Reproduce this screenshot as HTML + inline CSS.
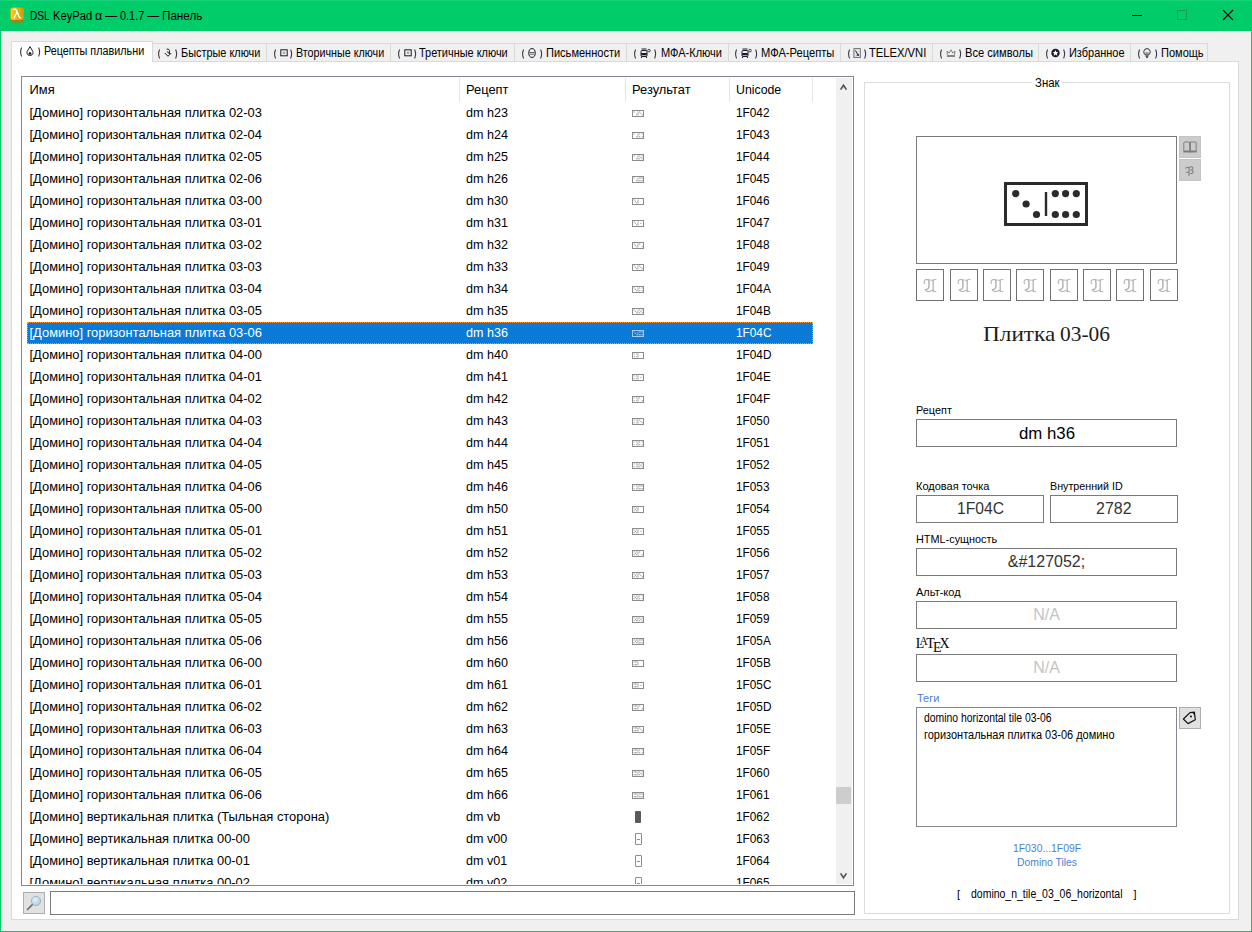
<!DOCTYPE html>
<html><head><meta charset="utf-8"><title>DSL KeyPad</title>
<style>
html,body{margin:0;padding:0;}
body{width:1252px;height:932px;position:relative;overflow:hidden;background:#F0F0F0;font-family:"Liberation Sans",sans-serif;}
.r{position:absolute;}
.t{position:absolute;white-space:pre;font-family:"Liberation Sans",sans-serif;}
</style></head><body>
<div class="r" style="left:0px;top:0px;width:1252px;height:31px;background:#00CC6A;"></div>
<div class="r" style="left:0px;top:0px;width:1252px;height:1px;background:#19D27A;"></div>
<div class="r" style="left:0px;top:0px;width:1px;height:932px;background:#00CC6A;"></div>
<div class="r" style="left:1251px;top:0px;width:1px;height:932px;background:#00CC6A;"></div>
<div class="r" style="left:0px;top:931px;width:1252px;height:1px;background:#00CC6A;"></div>
<svg class="r" style="left:10px;top:7px" width="15" height="16" viewBox="0 0 15 16"><defs><linearGradient id="gi" x1="0" x2="1" y1="0" y2="0"><stop offset="0" stop-color="#FAD01E"/><stop offset="1" stop-color="#C9980E"/></linearGradient></defs><rect x="0.5" y="1.5" width="13.5" height="14" rx="2.5" fill="#B07D12"/><rect x="0.5" y="0.5" width="13.5" height="12.5" rx="2.5" fill="url(#gi)"/><path d="M3.8 2.3 Q5.9 1.6 6.6 3.4 L9.2 10 Q9.6 11 10.8 10.9" stroke="#fff" stroke-width="1.3" fill="none" stroke-linecap="round"/><path d="M6.9 5.4 L4.2 10.8" stroke="#fff" stroke-width="1.3" fill="none" stroke-linecap="round"/></svg>
<div class="t" style="left:30.10px;top:10px;font-size:12px;line-height:12px;color:#000;font-family:'Liberation Sans',sans-serif;transform:scaleX(0.8439);transform-origin:0 0;">DSL</div>
<div class="t" style="left:53.10px;top:10px;font-size:12px;line-height:12px;color:#000;font-family:'Liberation Sans',sans-serif;transform:scaleX(0.9326);transform-origin:0 0;">KeyPad</div>
<div class="t" style="left:94.90px;top:10px;font-size:12px;line-height:12px;color:#000;font-family:'Liberation Sans',sans-serif;transform:scaleX(1.0378);transform-origin:0 0;">α</div>
<div class="t" style="left:104.70px;top:10px;font-size:12px;line-height:12px;color:#000;font-family:'Liberation Sans',sans-serif;transform:scaleX(1.0083);transform-origin:0 0;">—</div>
<div class="t" style="left:119.60px;top:10px;font-size:12px;line-height:12px;color:#000;font-family:'Liberation Sans',sans-serif;transform:scaleX(0.9100);transform-origin:0 0;">0.1.7</div>
<div class="t" style="left:147.20px;top:10px;font-size:12px;line-height:12px;color:#000;font-family:'Liberation Sans',sans-serif;transform:scaleX(1.0083);transform-origin:0 0;">—</div>
<div class="t" style="left:162.40px;top:10px;font-size:12px;line-height:12px;color:#000;font-family:'Liberation Sans',sans-serif;transform:scaleX(0.9718);transform-origin:0 0;">Панель</div>
<div class="r" style="left:1132px;top:15px;width:10px;height:1px;background:#000;"></div>
<div class="r" style="left:1177px;top:10px;width:10px;height:10px;box-sizing:border-box;border:1px solid #1F9A5C;"></div>
<svg class="r" style="left:1222px;top:9px" width="12" height="12" viewBox="0 0 12 12"><path d="M1 1 L11 11 M11 1 L1 11" stroke="#000" stroke-width="1.1"/></svg>
<div class="r" style="left:11px;top:61px;width:1228px;height:859px;box-sizing:border-box;border:1px solid #D9D9D9;background:#FFFFFF;"></div>
<div class="r" style="left:152px;top:43px;width:115px;height:19px;box-sizing:border-box;border:1px solid #D9D9D9;background:#F0F0F0;"></div>
<div class="r" style="left:266px;top:43px;width:125px;height:19px;box-sizing:border-box;border:1px solid #D9D9D9;background:#F0F0F0;"></div>
<div class="r" style="left:390px;top:43px;width:125px;height:19px;box-sizing:border-box;border:1px solid #D9D9D9;background:#F0F0F0;"></div>
<div class="r" style="left:514px;top:43px;width:113px;height:19px;box-sizing:border-box;border:1px solid #D9D9D9;background:#F0F0F0;"></div>
<div class="r" style="left:626px;top:43px;width:103px;height:19px;box-sizing:border-box;border:1px solid #D9D9D9;background:#F0F0F0;"></div>
<div class="r" style="left:728px;top:43px;width:113px;height:19px;box-sizing:border-box;border:1px solid #D9D9D9;background:#F0F0F0;"></div>
<div class="r" style="left:840px;top:43px;width:93px;height:19px;box-sizing:border-box;border:1px solid #D9D9D9;background:#F0F0F0;"></div>
<div class="r" style="left:932px;top:43px;width:107px;height:19px;box-sizing:border-box;border:1px solid #D9D9D9;background:#F0F0F0;"></div>
<div class="r" style="left:1038px;top:43px;width:93px;height:19px;box-sizing:border-box;border:1px solid #D9D9D9;background:#F0F0F0;"></div>
<div class="r" style="left:1130px;top:43px;width:78px;height:19px;box-sizing:border-box;border:1px solid #D9D9D9;background:#F0F0F0;"></div>
<div class="r" style="left:11px;top:41px;width:142px;height:21px;box-sizing:border-box;border:1px solid #D9D9D9;border-bottom:none;background:#FFFFFF;"></div>
<div class="r" style="left:12px;top:61px;width:140px;height:1px;background:#FFFFFF;"></div>
<svg class="r" style="left:19.1px;top:47px" width="3" height="10" viewBox="0 0 3 10"><path d="M2.6 0.5 Q0.6 5 2.6 9.5" stroke="#3A3A4A" stroke-width="1.1" fill="none"/></svg>
<svg class="r" style="left:26px;top:46px" width="8" height="10" viewBox="0 0 8 10"><path d="M4 0.6 L6.9 5.6 Q7.6 9.4 4 9.4 Q0.4 9.4 1.1 5.6 Z" fill="none" stroke="#222" stroke-width="1"/><path d="M2 8.6 L4 5.6 L6 8.6 Z" fill="#111"/></svg>
<svg class="r" style="left:37.8px;top:47px" width="3" height="10" viewBox="0 0 3 10"><path d="M0.6 0.5 Q2.6 5 0.6 9.5" stroke="#3A3A4A" stroke-width="1.1" fill="none"/></svg>
<div class="t" style="left:44.10px;top:45px;font-size:12px;line-height:12px;color:#000;font-family:'Liberation Sans',sans-serif;transform:scaleX(0.8998);transform-origin:0 0;">Рецепты плавильни</div>
<svg class="r" style="left:157.2px;top:49px" width="3" height="10" viewBox="0 0 3 10"><path d="M2.6 0.5 Q0.6 5 2.6 9.5" stroke="#3A3A4A" stroke-width="1.1" fill="none"/></svg>
<svg class="r" style="left:163.6px;top:48px" width="8" height="10" viewBox="0 0 8 10"><path d="M0.8 5 L4 8.3 L7.2 5" stroke="#1A1A2A" stroke-width="1" fill="none"/><path d="M2.6 1.2 Q5 0.6 5.4 2.4 V6 M3.2 3.4 Q3.6 5 5 5" stroke="#1A1A2A" stroke-width="1" fill="none"/></svg>
<svg class="r" style="left:174.8px;top:49px" width="3" height="10" viewBox="0 0 3 10"><path d="M0.6 0.5 Q2.6 5 0.6 9.5" stroke="#3A3A4A" stroke-width="1.1" fill="none"/></svg>
<div class="t" style="left:181.00px;top:47px;font-size:12px;line-height:12px;color:#000;font-family:'Liberation Sans',sans-serif;transform:scaleX(0.9086);transform-origin:0 0;">Быстрые ключи</div>
<svg class="r" style="left:273.2px;top:49px" width="3" height="10" viewBox="0 0 3 10"><path d="M2.6 0.5 Q0.6 5 2.6 9.5" stroke="#3A3A4A" stroke-width="1.1" fill="none"/></svg>
<svg class="r" style="left:279.6px;top:48px" width="8" height="10" viewBox="0 0 8 10"><rect x="0.8" y="1.8" width="6.4" height="6" fill="none" stroke="#1A1A2A" stroke-width="1"/><rect x="2.8" y="3.6" width="2.4" height="2.4" fill="#aaa"/></svg>
<svg class="r" style="left:290px;top:49px" width="3" height="10" viewBox="0 0 3 10"><path d="M0.6 0.5 Q2.6 5 0.6 9.5" stroke="#3A3A4A" stroke-width="1.1" fill="none"/></svg>
<div class="t" style="left:296.20px;top:47px;font-size:12px;line-height:12px;color:#000;font-family:'Liberation Sans',sans-serif;transform:scaleX(0.8944);transform-origin:0 0;">Вторичные ключи</div>
<svg class="r" style="left:397.2px;top:49px" width="3" height="10" viewBox="0 0 3 10"><path d="M2.6 0.5 Q0.6 5 2.6 9.5" stroke="#3A3A4A" stroke-width="1.1" fill="none"/></svg>
<svg class="r" style="left:403.6px;top:48px" width="8" height="10" viewBox="0 0 8 10"><rect x="0.8" y="1.8" width="6.4" height="6" fill="none" stroke="#1A1A2A" stroke-width="1"/><rect x="2.8" y="3.6" width="2.4" height="2.4" fill="#aaa"/></svg>
<svg class="r" style="left:414px;top:49px" width="3" height="10" viewBox="0 0 3 10"><path d="M0.6 0.5 Q2.6 5 0.6 9.5" stroke="#3A3A4A" stroke-width="1.1" fill="none"/></svg>
<div class="t" style="left:419.40px;top:47px;font-size:12px;line-height:12px;color:#000;font-family:'Liberation Sans',sans-serif;transform:scaleX(0.9106);transform-origin:0 0;">Третичные ключи</div>
<svg class="r" style="left:521.2px;top:49px" width="3" height="10" viewBox="0 0 3 10"><path d="M2.6 0.5 Q0.6 5 2.6 9.5" stroke="#3A3A4A" stroke-width="1.1" fill="none"/></svg>
<svg class="r" style="left:527.8px;top:48px" width="8" height="10" viewBox="0 0 8 10"><ellipse cx="4" cy="5" rx="3.2" ry="4.4" fill="none" stroke="#1A1A2A" stroke-width="1"/><path d="M1.5 4.5 H6.5 M2 6.2 H6" stroke="#666" stroke-width="1"/></svg>
<svg class="r" style="left:540px;top:49px" width="3" height="10" viewBox="0 0 3 10"><path d="M0.6 0.5 Q2.6 5 0.6 9.5" stroke="#3A3A4A" stroke-width="1.1" fill="none"/></svg>
<div class="t" style="left:546.10px;top:47px;font-size:12px;line-height:12px;color:#000;font-family:'Liberation Sans',sans-serif;transform:scaleX(0.9201);transform-origin:0 0;">Письменности</div>
<svg class="r" style="left:633.2px;top:49px" width="3" height="10" viewBox="0 0 3 10"><path d="M2.6 0.5 Q0.6 5 2.6 9.5" stroke="#3A3A4A" stroke-width="1.1" fill="none"/></svg>
<svg class="r" style="left:639.6px;top:48px" width="11" height="10" viewBox="0 0 11 10"><path d="M1.5 1 H6.5" stroke="#1A1A2A" stroke-width="1"/><rect x="1" y="2.5" width="6" height="6" rx="1" fill="none" stroke="#1A1A2A" stroke-width="1"/><rect x="1.2" y="5" width="5.6" height="2.3" fill="#1A1A2A"/><path d="M2 8.5 L1.2 10 M6 8.5 L6.8 10" stroke="#1A1A2A" stroke-width="1"/><circle cx="9" cy="2.6" r="1.3" fill="none" stroke="#334" stroke-width="0.9"/></svg>
<svg class="r" style="left:653.6px;top:49px" width="3" height="10" viewBox="0 0 3 10"><path d="M0.6 0.5 Q2.6 5 0.6 9.5" stroke="#3A3A4A" stroke-width="1.1" fill="none"/></svg>
<div class="t" style="left:660.50px;top:47px;font-size:12px;line-height:12px;color:#000;font-family:'Liberation Sans',sans-serif;transform:scaleX(0.9186);transform-origin:0 0;">МФА-Ключи</div>
<svg class="r" style="left:734px;top:49px" width="3" height="10" viewBox="0 0 3 10"><path d="M2.6 0.5 Q0.6 5 2.6 9.5" stroke="#3A3A4A" stroke-width="1.1" fill="none"/></svg>
<svg class="r" style="left:740.8px;top:48px" width="11" height="10" viewBox="0 0 11 10"><path d="M1.5 1 H6.5" stroke="#1A1A2A" stroke-width="1"/><rect x="1" y="2.5" width="6" height="6" rx="1" fill="none" stroke="#1A1A2A" stroke-width="1"/><rect x="1.2" y="5" width="5.6" height="2.3" fill="#1A1A2A"/><path d="M2 8.5 L1.2 10 M6 8.5 L6.8 10" stroke="#1A1A2A" stroke-width="1"/><circle cx="9" cy="2.6" r="1.3" fill="none" stroke="#334" stroke-width="0.9"/></svg>
<svg class="r" style="left:754.8px;top:49px" width="3" height="10" viewBox="0 0 3 10"><path d="M0.6 0.5 Q2.6 5 0.6 9.5" stroke="#3A3A4A" stroke-width="1.1" fill="none"/></svg>
<div class="t" style="left:760.90px;top:47px;font-size:12px;line-height:12px;color:#000;font-family:'Liberation Sans',sans-serif;transform:scaleX(0.9302);transform-origin:0 0;">МФА-Рецепты</div>
<svg class="r" style="left:847.2px;top:49px" width="3" height="10" viewBox="0 0 3 10"><path d="M2.6 0.5 Q0.6 5 2.6 9.5" stroke="#3A3A4A" stroke-width="1.1" fill="none"/></svg>
<svg class="r" style="left:853px;top:48px" width="8" height="10" viewBox="0 0 8 10"><rect x="0.9" y="0.6" width="6.4" height="9" fill="#E4E4F0" stroke="#666" stroke-width="0.9"/><path d="M2.4 2.4 L5.6 8 M3.6 7.6 L5.8 6.2" stroke="#222" stroke-width="1"/></svg>
<svg class="r" style="left:864px;top:49px" width="3" height="10" viewBox="0 0 3 10"><path d="M0.6 0.5 Q2.6 5 0.6 9.5" stroke="#3A3A4A" stroke-width="1.1" fill="none"/></svg>
<div class="t" style="left:869.40px;top:47px;font-size:12px;line-height:12px;color:#000;font-family:'Liberation Sans',sans-serif;transform:scaleX(0.9338);transform-origin:0 0;">TELEX/VNI</div>
<svg class="r" style="left:939.2px;top:49px" width="3" height="10" viewBox="0 0 3 10"><path d="M2.6 0.5 Q0.6 5 2.6 9.5" stroke="#3A3A4A" stroke-width="1.1" fill="none"/></svg>
<svg class="r" style="left:945.5px;top:48px" width="10" height="10" viewBox="0 0 10 10"><path d="M1 8.5 H9 M1.5 7.5 L1 3 L3.2 5 L5 1.8 L6.8 5 L9 3 L8.5 7.5 Z" fill="none" stroke="#777" stroke-width="0.9"/></svg>
<svg class="r" style="left:958.8px;top:49px" width="3" height="10" viewBox="0 0 3 10"><path d="M0.6 0.5 Q2.6 5 0.6 9.5" stroke="#3A3A4A" stroke-width="1.1" fill="none"/></svg>
<div class="t" style="left:964.90px;top:47px;font-size:12px;line-height:12px;color:#000;font-family:'Liberation Sans',sans-serif;transform:scaleX(0.9270);transform-origin:0 0;">Все символы</div>
<svg class="r" style="left:1045.2px;top:49px" width="3" height="10" viewBox="0 0 3 10"><path d="M2.6 0.5 Q0.6 5 2.6 9.5" stroke="#3A3A4A" stroke-width="1.1" fill="none"/></svg>
<svg class="r" style="left:1051px;top:48px" width="9" height="10" viewBox="0 0 9 10"><circle cx="4.5" cy="5" r="4.2" fill="#1A1A2A"/><path d="M4.5 2 L5.3 4.1 L7.4 4.2 L5.8 5.5 L6.3 7.7 L4.5 6.5 L2.7 7.7 L3.2 5.5 L1.6 4.2 L3.7 4.1Z" fill="#fff"/></svg>
<svg class="r" style="left:1062.8px;top:49px" width="3" height="10" viewBox="0 0 3 10"><path d="M0.6 0.5 Q2.6 5 0.6 9.5" stroke="#3A3A4A" stroke-width="1.1" fill="none"/></svg>
<div class="t" style="left:1068.90px;top:47px;font-size:12px;line-height:12px;color:#000;font-family:'Liberation Sans',sans-serif;transform:scaleX(0.9124);transform-origin:0 0;">Избранное</div>
<svg class="r" style="left:1137px;top:49px" width="3" height="10" viewBox="0 0 3 10"><path d="M2.6 0.5 Q0.6 5 2.6 9.5" stroke="#3A3A4A" stroke-width="1.1" fill="none"/></svg>
<svg class="r" style="left:1143px;top:48px" width="8" height="10" viewBox="0 0 8 10"><path d="M2.3 7 Q0.5 5.2 0.8 3.4 Q1.3 0.6 4 0.6 Q6.7 0.6 7.2 3.4 Q7.5 5.2 5.7 7 Z M2.6 8.2 H5.4 M3 9.3 H5" fill="none" stroke="#1A1A2A" stroke-width="0.9"/><path d="M3 7 V4.4 L4 5.4 L5 4.4 V7" fill="none" stroke="#444" stroke-width="0.7"/></svg>
<svg class="r" style="left:1155px;top:49px" width="3" height="10" viewBox="0 0 3 10"><path d="M0.6 0.5 Q2.6 5 0.6 9.5" stroke="#3A3A4A" stroke-width="1.1" fill="none"/></svg>
<div class="t" style="left:1160.90px;top:47px;font-size:12px;line-height:12px;color:#000;font-family:'Liberation Sans',sans-serif;transform:scaleX(0.9189);transform-origin:0 0;">Помощь</div>
<div class="r" style="left:21px;top:76px;width:833px;height:810px;box-sizing:border-box;border:1px solid #828790;background:#FFFFFF;"></div>
<div class="r" style="left:459px;top:78px;width:1px;height:24px;background:#E5E5E5;"></div>
<div class="r" style="left:625px;top:78px;width:1px;height:24px;background:#E5E5E5;"></div>
<div class="r" style="left:729px;top:78px;width:1px;height:24px;background:#E5E5E5;"></div>
<div class="r" style="left:812px;top:78px;width:1px;height:24px;background:#E5E5E5;"></div>
<div class="t" style="left:29.50px;top:84px;font-size:12.9px;line-height:12.9px;color:#000;font-family:'Liberation Sans',sans-serif;">Имя</div>
<div class="t" style="left:466.00px;top:84px;font-size:12.9px;line-height:12.9px;color:#000;font-family:'Liberation Sans',sans-serif;">Рецепт</div>
<div class="t" style="left:632.00px;top:84px;font-size:12.9px;line-height:12.9px;color:#000;font-family:'Liberation Sans',sans-serif;">Результат</div>
<div class="t" style="left:736.00px;top:84px;font-size:12.9px;line-height:12.9px;color:#000;font-family:'Liberation Sans',sans-serif;transform:scaleX(0.9557);transform-origin:0 0;">Unicode</div>
<div class="r" style="left:22px;top:102px;width:814px;height:782px;overflow:hidden">
<div class="t" style="left:7.5px;top:5px;font-size:12.9px;line-height:12.9px;color:#000;">[Домино] горизонтальная плитка 02-03</div><div class="t" style="left:444px;top:5px;font-size:12.9px;line-height:12.9px;color:#000;transform:scaleX(0.975);transform-origin:0 0;">dm h23</div><div class="t" style="left:714px;top:5px;font-size:12.9px;line-height:12.9px;color:#000;transform:scaleX(0.915);transform-origin:0 0;">1F042</div><div class="r" style="left:610px;top:8px;width:12px;height:7px;box-sizing:border-box;border:1px solid #8C8C8C;"></div><svg class="r" style="left:610px;top:8px" width="12" height="7"><rect x="5.6" y="1.5" width="0.8" height="4" fill="#9A9A9A"/><rect x="1.6" y="1.4" width="1.1" height="1.1" fill="#9A9A9A"/><rect x="4.2" y="4.2" width="1.1" height="1.1" fill="#9A9A9A"/><rect x="7.1" y="1.4" width="1.1" height="1.1" fill="#9A9A9A"/><rect x="8.4" y="2.8" width="1.1" height="1.1" fill="#9A9A9A"/><rect x="9.7" y="4.2" width="1.1" height="1.1" fill="#9A9A9A"/></svg><div class="t" style="left:7.5px;top:27px;font-size:12.9px;line-height:12.9px;color:#000;">[Домино] горизонтальная плитка 02-04</div><div class="t" style="left:444px;top:27px;font-size:12.9px;line-height:12.9px;color:#000;transform:scaleX(0.975);transform-origin:0 0;">dm h24</div><div class="t" style="left:714px;top:27px;font-size:12.9px;line-height:12.9px;color:#000;transform:scaleX(0.915);transform-origin:0 0;">1F043</div><div class="r" style="left:610px;top:30px;width:12px;height:7px;box-sizing:border-box;border:1px solid #8C8C8C;"></div><svg class="r" style="left:610px;top:30px" width="12" height="7"><rect x="5.6" y="1.5" width="0.8" height="4" fill="#9A9A9A"/><rect x="1.6" y="1.4" width="1.1" height="1.1" fill="#9A9A9A"/><rect x="4.2" y="4.2" width="1.1" height="1.1" fill="#9A9A9A"/><rect x="7.1" y="1.4" width="1.1" height="1.1" fill="#9A9A9A"/><rect x="9.7" y="1.4" width="1.1" height="1.1" fill="#9A9A9A"/><rect x="7.1" y="4.2" width="1.1" height="1.1" fill="#9A9A9A"/><rect x="9.7" y="4.2" width="1.1" height="1.1" fill="#9A9A9A"/></svg><div class="t" style="left:7.5px;top:49px;font-size:12.9px;line-height:12.9px;color:#000;">[Домино] горизонтальная плитка 02-05</div><div class="t" style="left:444px;top:49px;font-size:12.9px;line-height:12.9px;color:#000;transform:scaleX(0.975);transform-origin:0 0;">dm h25</div><div class="t" style="left:714px;top:49px;font-size:12.9px;line-height:12.9px;color:#000;transform:scaleX(0.915);transform-origin:0 0;">1F044</div><div class="r" style="left:610px;top:52px;width:12px;height:7px;box-sizing:border-box;border:1px solid #8C8C8C;"></div><svg class="r" style="left:610px;top:52px" width="12" height="7"><rect x="5.6" y="1.5" width="0.8" height="4" fill="#9A9A9A"/><rect x="1.6" y="1.4" width="1.1" height="1.1" fill="#9A9A9A"/><rect x="4.2" y="4.2" width="1.1" height="1.1" fill="#9A9A9A"/><rect x="7.1" y="1.4" width="1.1" height="1.1" fill="#9A9A9A"/><rect x="9.7" y="1.4" width="1.1" height="1.1" fill="#9A9A9A"/><rect x="8.4" y="2.8" width="1.1" height="1.1" fill="#9A9A9A"/><rect x="7.1" y="4.2" width="1.1" height="1.1" fill="#9A9A9A"/><rect x="9.7" y="4.2" width="1.1" height="1.1" fill="#9A9A9A"/></svg><div class="t" style="left:7.5px;top:71px;font-size:12.9px;line-height:12.9px;color:#000;">[Домино] горизонтальная плитка 02-06</div><div class="t" style="left:444px;top:71px;font-size:12.9px;line-height:12.9px;color:#000;transform:scaleX(0.975);transform-origin:0 0;">dm h26</div><div class="t" style="left:714px;top:71px;font-size:12.9px;line-height:12.9px;color:#000;transform:scaleX(0.915);transform-origin:0 0;">1F045</div><div class="r" style="left:610px;top:74px;width:12px;height:7px;box-sizing:border-box;border:1px solid #8C8C8C;"></div><svg class="r" style="left:610px;top:74px" width="12" height="7"><rect x="5.6" y="1.5" width="0.8" height="4" fill="#9A9A9A"/><rect x="1.6" y="1.4" width="1.1" height="1.1" fill="#9A9A9A"/><rect x="4.2" y="4.2" width="1.1" height="1.1" fill="#9A9A9A"/><rect x="7.1" y="1.4" width="1.1" height="1.1" fill="#9A9A9A"/><rect x="8.4" y="1.4" width="1.1" height="1.1" fill="#9A9A9A"/><rect x="9.7" y="1.4" width="1.1" height="1.1" fill="#9A9A9A"/><rect x="7.1" y="4.2" width="1.1" height="1.1" fill="#9A9A9A"/><rect x="8.4" y="4.2" width="1.1" height="1.1" fill="#9A9A9A"/><rect x="9.7" y="4.2" width="1.1" height="1.1" fill="#9A9A9A"/></svg><div class="t" style="left:7.5px;top:93px;font-size:12.9px;line-height:12.9px;color:#000;">[Домино] горизонтальная плитка 03-00</div><div class="t" style="left:444px;top:93px;font-size:12.9px;line-height:12.9px;color:#000;transform:scaleX(0.975);transform-origin:0 0;">dm h30</div><div class="t" style="left:714px;top:93px;font-size:12.9px;line-height:12.9px;color:#000;transform:scaleX(0.915);transform-origin:0 0;">1F046</div><div class="r" style="left:610px;top:96px;width:12px;height:7px;box-sizing:border-box;border:1px solid #8C8C8C;"></div><svg class="r" style="left:610px;top:96px" width="12" height="7"><rect x="5.6" y="1.5" width="0.8" height="4" fill="#9A9A9A"/><rect x="1.6" y="1.4" width="1.1" height="1.1" fill="#9A9A9A"/><rect x="2.9" y="2.8" width="1.1" height="1.1" fill="#9A9A9A"/><rect x="4.2" y="4.2" width="1.1" height="1.1" fill="#9A9A9A"/></svg><div class="t" style="left:7.5px;top:115px;font-size:12.9px;line-height:12.9px;color:#000;">[Домино] горизонтальная плитка 03-01</div><div class="t" style="left:444px;top:115px;font-size:12.9px;line-height:12.9px;color:#000;transform:scaleX(0.975);transform-origin:0 0;">dm h31</div><div class="t" style="left:714px;top:115px;font-size:12.9px;line-height:12.9px;color:#000;transform:scaleX(0.915);transform-origin:0 0;">1F047</div><div class="r" style="left:610px;top:118px;width:12px;height:7px;box-sizing:border-box;border:1px solid #8C8C8C;"></div><svg class="r" style="left:610px;top:118px" width="12" height="7"><rect x="5.6" y="1.5" width="0.8" height="4" fill="#9A9A9A"/><rect x="1.6" y="1.4" width="1.1" height="1.1" fill="#9A9A9A"/><rect x="2.9" y="2.8" width="1.1" height="1.1" fill="#9A9A9A"/><rect x="4.2" y="4.2" width="1.1" height="1.1" fill="#9A9A9A"/><rect x="8.4" y="2.8" width="1.1" height="1.1" fill="#9A9A9A"/></svg><div class="t" style="left:7.5px;top:137px;font-size:12.9px;line-height:12.9px;color:#000;">[Домино] горизонтальная плитка 03-02</div><div class="t" style="left:444px;top:137px;font-size:12.9px;line-height:12.9px;color:#000;transform:scaleX(0.975);transform-origin:0 0;">dm h32</div><div class="t" style="left:714px;top:137px;font-size:12.9px;line-height:12.9px;color:#000;transform:scaleX(0.915);transform-origin:0 0;">1F048</div><div class="r" style="left:610px;top:140px;width:12px;height:7px;box-sizing:border-box;border:1px solid #8C8C8C;"></div><svg class="r" style="left:610px;top:140px" width="12" height="7"><rect x="5.6" y="1.5" width="0.8" height="4" fill="#9A9A9A"/><rect x="1.6" y="1.4" width="1.1" height="1.1" fill="#9A9A9A"/><rect x="2.9" y="2.8" width="1.1" height="1.1" fill="#9A9A9A"/><rect x="4.2" y="4.2" width="1.1" height="1.1" fill="#9A9A9A"/><rect x="7.1" y="1.4" width="1.1" height="1.1" fill="#9A9A9A"/><rect x="9.7" y="4.2" width="1.1" height="1.1" fill="#9A9A9A"/></svg><div class="t" style="left:7.5px;top:159px;font-size:12.9px;line-height:12.9px;color:#000;">[Домино] горизонтальная плитка 03-03</div><div class="t" style="left:444px;top:159px;font-size:12.9px;line-height:12.9px;color:#000;transform:scaleX(0.975);transform-origin:0 0;">dm h33</div><div class="t" style="left:714px;top:159px;font-size:12.9px;line-height:12.9px;color:#000;transform:scaleX(0.915);transform-origin:0 0;">1F049</div><div class="r" style="left:610px;top:162px;width:12px;height:7px;box-sizing:border-box;border:1px solid #8C8C8C;"></div><svg class="r" style="left:610px;top:162px" width="12" height="7"><rect x="5.6" y="1.5" width="0.8" height="4" fill="#9A9A9A"/><rect x="1.6" y="1.4" width="1.1" height="1.1" fill="#9A9A9A"/><rect x="2.9" y="2.8" width="1.1" height="1.1" fill="#9A9A9A"/><rect x="4.2" y="4.2" width="1.1" height="1.1" fill="#9A9A9A"/><rect x="7.1" y="1.4" width="1.1" height="1.1" fill="#9A9A9A"/><rect x="8.4" y="2.8" width="1.1" height="1.1" fill="#9A9A9A"/><rect x="9.7" y="4.2" width="1.1" height="1.1" fill="#9A9A9A"/></svg><div class="t" style="left:7.5px;top:181px;font-size:12.9px;line-height:12.9px;color:#000;">[Домино] горизонтальная плитка 03-04</div><div class="t" style="left:444px;top:181px;font-size:12.9px;line-height:12.9px;color:#000;transform:scaleX(0.975);transform-origin:0 0;">dm h34</div><div class="t" style="left:714px;top:181px;font-size:12.9px;line-height:12.9px;color:#000;transform:scaleX(0.915);transform-origin:0 0;">1F04A</div><div class="r" style="left:610px;top:184px;width:12px;height:7px;box-sizing:border-box;border:1px solid #8C8C8C;"></div><svg class="r" style="left:610px;top:184px" width="12" height="7"><rect x="5.6" y="1.5" width="0.8" height="4" fill="#9A9A9A"/><rect x="1.6" y="1.4" width="1.1" height="1.1" fill="#9A9A9A"/><rect x="2.9" y="2.8" width="1.1" height="1.1" fill="#9A9A9A"/><rect x="4.2" y="4.2" width="1.1" height="1.1" fill="#9A9A9A"/><rect x="7.1" y="1.4" width="1.1" height="1.1" fill="#9A9A9A"/><rect x="9.7" y="1.4" width="1.1" height="1.1" fill="#9A9A9A"/><rect x="7.1" y="4.2" width="1.1" height="1.1" fill="#9A9A9A"/><rect x="9.7" y="4.2" width="1.1" height="1.1" fill="#9A9A9A"/></svg><div class="t" style="left:7.5px;top:203px;font-size:12.9px;line-height:12.9px;color:#000;">[Домино] горизонтальная плитка 03-05</div><div class="t" style="left:444px;top:203px;font-size:12.9px;line-height:12.9px;color:#000;transform:scaleX(0.975);transform-origin:0 0;">dm h35</div><div class="t" style="left:714px;top:203px;font-size:12.9px;line-height:12.9px;color:#000;transform:scaleX(0.915);transform-origin:0 0;">1F04B</div><div class="r" style="left:610px;top:206px;width:12px;height:7px;box-sizing:border-box;border:1px solid #8C8C8C;"></div><svg class="r" style="left:610px;top:206px" width="12" height="7"><rect x="5.6" y="1.5" width="0.8" height="4" fill="#9A9A9A"/><rect x="1.6" y="1.4" width="1.1" height="1.1" fill="#9A9A9A"/><rect x="2.9" y="2.8" width="1.1" height="1.1" fill="#9A9A9A"/><rect x="4.2" y="4.2" width="1.1" height="1.1" fill="#9A9A9A"/><rect x="7.1" y="1.4" width="1.1" height="1.1" fill="#9A9A9A"/><rect x="9.7" y="1.4" width="1.1" height="1.1" fill="#9A9A9A"/><rect x="8.4" y="2.8" width="1.1" height="1.1" fill="#9A9A9A"/><rect x="7.1" y="4.2" width="1.1" height="1.1" fill="#9A9A9A"/><rect x="9.7" y="4.2" width="1.1" height="1.1" fill="#9A9A9A"/></svg><div class="r" style="left:5px;top:220px;width:786px;height:22px;background:#0A7AD6;box-sizing:border-box;border:1px dotted #FF9A30;"></div><div class="t" style="left:7.5px;top:225px;font-size:12.9px;line-height:12.9px;color:#FFF;">[Домино] горизонтальная плитка 03-06</div><div class="t" style="left:444px;top:225px;font-size:12.9px;line-height:12.9px;color:#FFF;transform:scaleX(0.975);transform-origin:0 0;">dm h36</div><div class="t" style="left:714px;top:225px;font-size:12.9px;line-height:12.9px;color:#FFF;transform:scaleX(0.915);transform-origin:0 0;">1F04C</div><div class="r" style="left:610px;top:228px;width:12px;height:7px;box-sizing:border-box;border:1px solid #A9C6EE;"></div><svg class="r" style="left:610px;top:228px" width="12" height="7"><rect x="5.6" y="1.5" width="0.8" height="4" fill="#B0C8EE"/><rect x="1.6" y="1.4" width="1.1" height="1.1" fill="#B0C8EE"/><rect x="2.9" y="2.8" width="1.1" height="1.1" fill="#B0C8EE"/><rect x="4.2" y="4.2" width="1.1" height="1.1" fill="#B0C8EE"/><rect x="7.1" y="1.4" width="1.1" height="1.1" fill="#B0C8EE"/><rect x="8.4" y="1.4" width="1.1" height="1.1" fill="#B0C8EE"/><rect x="9.7" y="1.4" width="1.1" height="1.1" fill="#B0C8EE"/><rect x="7.1" y="4.2" width="1.1" height="1.1" fill="#B0C8EE"/><rect x="8.4" y="4.2" width="1.1" height="1.1" fill="#B0C8EE"/><rect x="9.7" y="4.2" width="1.1" height="1.1" fill="#B0C8EE"/></svg><div class="t" style="left:7.5px;top:247px;font-size:12.9px;line-height:12.9px;color:#000;">[Домино] горизонтальная плитка 04-00</div><div class="t" style="left:444px;top:247px;font-size:12.9px;line-height:12.9px;color:#000;transform:scaleX(0.975);transform-origin:0 0;">dm h40</div><div class="t" style="left:714px;top:247px;font-size:12.9px;line-height:12.9px;color:#000;transform:scaleX(0.915);transform-origin:0 0;">1F04D</div><div class="r" style="left:610px;top:250px;width:12px;height:7px;box-sizing:border-box;border:1px solid #8C8C8C;"></div><svg class="r" style="left:610px;top:250px" width="12" height="7"><rect x="5.6" y="1.5" width="0.8" height="4" fill="#9A9A9A"/><rect x="1.6" y="1.4" width="1.1" height="1.1" fill="#9A9A9A"/><rect x="4.2" y="1.4" width="1.1" height="1.1" fill="#9A9A9A"/><rect x="1.6" y="4.2" width="1.1" height="1.1" fill="#9A9A9A"/><rect x="4.2" y="4.2" width="1.1" height="1.1" fill="#9A9A9A"/></svg><div class="t" style="left:7.5px;top:269px;font-size:12.9px;line-height:12.9px;color:#000;">[Домино] горизонтальная плитка 04-01</div><div class="t" style="left:444px;top:269px;font-size:12.9px;line-height:12.9px;color:#000;transform:scaleX(0.975);transform-origin:0 0;">dm h41</div><div class="t" style="left:714px;top:269px;font-size:12.9px;line-height:12.9px;color:#000;transform:scaleX(0.915);transform-origin:0 0;">1F04E</div><div class="r" style="left:610px;top:272px;width:12px;height:7px;box-sizing:border-box;border:1px solid #8C8C8C;"></div><svg class="r" style="left:610px;top:272px" width="12" height="7"><rect x="5.6" y="1.5" width="0.8" height="4" fill="#9A9A9A"/><rect x="1.6" y="1.4" width="1.1" height="1.1" fill="#9A9A9A"/><rect x="4.2" y="1.4" width="1.1" height="1.1" fill="#9A9A9A"/><rect x="1.6" y="4.2" width="1.1" height="1.1" fill="#9A9A9A"/><rect x="4.2" y="4.2" width="1.1" height="1.1" fill="#9A9A9A"/><rect x="8.4" y="2.8" width="1.1" height="1.1" fill="#9A9A9A"/></svg><div class="t" style="left:7.5px;top:291px;font-size:12.9px;line-height:12.9px;color:#000;">[Домино] горизонтальная плитка 04-02</div><div class="t" style="left:444px;top:291px;font-size:12.9px;line-height:12.9px;color:#000;transform:scaleX(0.975);transform-origin:0 0;">dm h42</div><div class="t" style="left:714px;top:291px;font-size:12.9px;line-height:12.9px;color:#000;transform:scaleX(0.915);transform-origin:0 0;">1F04F</div><div class="r" style="left:610px;top:294px;width:12px;height:7px;box-sizing:border-box;border:1px solid #8C8C8C;"></div><svg class="r" style="left:610px;top:294px" width="12" height="7"><rect x="5.6" y="1.5" width="0.8" height="4" fill="#9A9A9A"/><rect x="1.6" y="1.4" width="1.1" height="1.1" fill="#9A9A9A"/><rect x="4.2" y="1.4" width="1.1" height="1.1" fill="#9A9A9A"/><rect x="1.6" y="4.2" width="1.1" height="1.1" fill="#9A9A9A"/><rect x="4.2" y="4.2" width="1.1" height="1.1" fill="#9A9A9A"/><rect x="7.1" y="1.4" width="1.1" height="1.1" fill="#9A9A9A"/><rect x="9.7" y="4.2" width="1.1" height="1.1" fill="#9A9A9A"/></svg><div class="t" style="left:7.5px;top:313px;font-size:12.9px;line-height:12.9px;color:#000;">[Домино] горизонтальная плитка 04-03</div><div class="t" style="left:444px;top:313px;font-size:12.9px;line-height:12.9px;color:#000;transform:scaleX(0.975);transform-origin:0 0;">dm h43</div><div class="t" style="left:714px;top:313px;font-size:12.9px;line-height:12.9px;color:#000;transform:scaleX(0.915);transform-origin:0 0;">1F050</div><div class="r" style="left:610px;top:316px;width:12px;height:7px;box-sizing:border-box;border:1px solid #8C8C8C;"></div><svg class="r" style="left:610px;top:316px" width="12" height="7"><rect x="5.6" y="1.5" width="0.8" height="4" fill="#9A9A9A"/><rect x="1.6" y="1.4" width="1.1" height="1.1" fill="#9A9A9A"/><rect x="4.2" y="1.4" width="1.1" height="1.1" fill="#9A9A9A"/><rect x="1.6" y="4.2" width="1.1" height="1.1" fill="#9A9A9A"/><rect x="4.2" y="4.2" width="1.1" height="1.1" fill="#9A9A9A"/><rect x="7.1" y="1.4" width="1.1" height="1.1" fill="#9A9A9A"/><rect x="8.4" y="2.8" width="1.1" height="1.1" fill="#9A9A9A"/><rect x="9.7" y="4.2" width="1.1" height="1.1" fill="#9A9A9A"/></svg><div class="t" style="left:7.5px;top:335px;font-size:12.9px;line-height:12.9px;color:#000;">[Домино] горизонтальная плитка 04-04</div><div class="t" style="left:444px;top:335px;font-size:12.9px;line-height:12.9px;color:#000;transform:scaleX(0.975);transform-origin:0 0;">dm h44</div><div class="t" style="left:714px;top:335px;font-size:12.9px;line-height:12.9px;color:#000;transform:scaleX(0.915);transform-origin:0 0;">1F051</div><div class="r" style="left:610px;top:338px;width:12px;height:7px;box-sizing:border-box;border:1px solid #8C8C8C;"></div><svg class="r" style="left:610px;top:338px" width="12" height="7"><rect x="5.6" y="1.5" width="0.8" height="4" fill="#9A9A9A"/><rect x="1.6" y="1.4" width="1.1" height="1.1" fill="#9A9A9A"/><rect x="4.2" y="1.4" width="1.1" height="1.1" fill="#9A9A9A"/><rect x="1.6" y="4.2" width="1.1" height="1.1" fill="#9A9A9A"/><rect x="4.2" y="4.2" width="1.1" height="1.1" fill="#9A9A9A"/><rect x="7.1" y="1.4" width="1.1" height="1.1" fill="#9A9A9A"/><rect x="9.7" y="1.4" width="1.1" height="1.1" fill="#9A9A9A"/><rect x="7.1" y="4.2" width="1.1" height="1.1" fill="#9A9A9A"/><rect x="9.7" y="4.2" width="1.1" height="1.1" fill="#9A9A9A"/></svg><div class="t" style="left:7.5px;top:357px;font-size:12.9px;line-height:12.9px;color:#000;">[Домино] горизонтальная плитка 04-05</div><div class="t" style="left:444px;top:357px;font-size:12.9px;line-height:12.9px;color:#000;transform:scaleX(0.975);transform-origin:0 0;">dm h45</div><div class="t" style="left:714px;top:357px;font-size:12.9px;line-height:12.9px;color:#000;transform:scaleX(0.915);transform-origin:0 0;">1F052</div><div class="r" style="left:610px;top:360px;width:12px;height:7px;box-sizing:border-box;border:1px solid #8C8C8C;"></div><svg class="r" style="left:610px;top:360px" width="12" height="7"><rect x="5.6" y="1.5" width="0.8" height="4" fill="#9A9A9A"/><rect x="1.6" y="1.4" width="1.1" height="1.1" fill="#9A9A9A"/><rect x="4.2" y="1.4" width="1.1" height="1.1" fill="#9A9A9A"/><rect x="1.6" y="4.2" width="1.1" height="1.1" fill="#9A9A9A"/><rect x="4.2" y="4.2" width="1.1" height="1.1" fill="#9A9A9A"/><rect x="7.1" y="1.4" width="1.1" height="1.1" fill="#9A9A9A"/><rect x="9.7" y="1.4" width="1.1" height="1.1" fill="#9A9A9A"/><rect x="8.4" y="2.8" width="1.1" height="1.1" fill="#9A9A9A"/><rect x="7.1" y="4.2" width="1.1" height="1.1" fill="#9A9A9A"/><rect x="9.7" y="4.2" width="1.1" height="1.1" fill="#9A9A9A"/></svg><div class="t" style="left:7.5px;top:379px;font-size:12.9px;line-height:12.9px;color:#000;">[Домино] горизонтальная плитка 04-06</div><div class="t" style="left:444px;top:379px;font-size:12.9px;line-height:12.9px;color:#000;transform:scaleX(0.975);transform-origin:0 0;">dm h46</div><div class="t" style="left:714px;top:379px;font-size:12.9px;line-height:12.9px;color:#000;transform:scaleX(0.915);transform-origin:0 0;">1F053</div><div class="r" style="left:610px;top:382px;width:12px;height:7px;box-sizing:border-box;border:1px solid #8C8C8C;"></div><svg class="r" style="left:610px;top:382px" width="12" height="7"><rect x="5.6" y="1.5" width="0.8" height="4" fill="#9A9A9A"/><rect x="1.6" y="1.4" width="1.1" height="1.1" fill="#9A9A9A"/><rect x="4.2" y="1.4" width="1.1" height="1.1" fill="#9A9A9A"/><rect x="1.6" y="4.2" width="1.1" height="1.1" fill="#9A9A9A"/><rect x="4.2" y="4.2" width="1.1" height="1.1" fill="#9A9A9A"/><rect x="7.1" y="1.4" width="1.1" height="1.1" fill="#9A9A9A"/><rect x="8.4" y="1.4" width="1.1" height="1.1" fill="#9A9A9A"/><rect x="9.7" y="1.4" width="1.1" height="1.1" fill="#9A9A9A"/><rect x="7.1" y="4.2" width="1.1" height="1.1" fill="#9A9A9A"/><rect x="8.4" y="4.2" width="1.1" height="1.1" fill="#9A9A9A"/><rect x="9.7" y="4.2" width="1.1" height="1.1" fill="#9A9A9A"/></svg><div class="t" style="left:7.5px;top:401px;font-size:12.9px;line-height:12.9px;color:#000;">[Домино] горизонтальная плитка 05-00</div><div class="t" style="left:444px;top:401px;font-size:12.9px;line-height:12.9px;color:#000;transform:scaleX(0.975);transform-origin:0 0;">dm h50</div><div class="t" style="left:714px;top:401px;font-size:12.9px;line-height:12.9px;color:#000;transform:scaleX(0.915);transform-origin:0 0;">1F054</div><div class="r" style="left:610px;top:404px;width:12px;height:7px;box-sizing:border-box;border:1px solid #8C8C8C;"></div><svg class="r" style="left:610px;top:404px" width="12" height="7"><rect x="5.6" y="1.5" width="0.8" height="4" fill="#9A9A9A"/><rect x="1.6" y="1.4" width="1.1" height="1.1" fill="#9A9A9A"/><rect x="4.2" y="1.4" width="1.1" height="1.1" fill="#9A9A9A"/><rect x="2.9" y="2.8" width="1.1" height="1.1" fill="#9A9A9A"/><rect x="1.6" y="4.2" width="1.1" height="1.1" fill="#9A9A9A"/><rect x="4.2" y="4.2" width="1.1" height="1.1" fill="#9A9A9A"/></svg><div class="t" style="left:7.5px;top:423px;font-size:12.9px;line-height:12.9px;color:#000;">[Домино] горизонтальная плитка 05-01</div><div class="t" style="left:444px;top:423px;font-size:12.9px;line-height:12.9px;color:#000;transform:scaleX(0.975);transform-origin:0 0;">dm h51</div><div class="t" style="left:714px;top:423px;font-size:12.9px;line-height:12.9px;color:#000;transform:scaleX(0.915);transform-origin:0 0;">1F055</div><div class="r" style="left:610px;top:426px;width:12px;height:7px;box-sizing:border-box;border:1px solid #8C8C8C;"></div><svg class="r" style="left:610px;top:426px" width="12" height="7"><rect x="5.6" y="1.5" width="0.8" height="4" fill="#9A9A9A"/><rect x="1.6" y="1.4" width="1.1" height="1.1" fill="#9A9A9A"/><rect x="4.2" y="1.4" width="1.1" height="1.1" fill="#9A9A9A"/><rect x="2.9" y="2.8" width="1.1" height="1.1" fill="#9A9A9A"/><rect x="1.6" y="4.2" width="1.1" height="1.1" fill="#9A9A9A"/><rect x="4.2" y="4.2" width="1.1" height="1.1" fill="#9A9A9A"/><rect x="8.4" y="2.8" width="1.1" height="1.1" fill="#9A9A9A"/></svg><div class="t" style="left:7.5px;top:445px;font-size:12.9px;line-height:12.9px;color:#000;">[Домино] горизонтальная плитка 05-02</div><div class="t" style="left:444px;top:445px;font-size:12.9px;line-height:12.9px;color:#000;transform:scaleX(0.975);transform-origin:0 0;">dm h52</div><div class="t" style="left:714px;top:445px;font-size:12.9px;line-height:12.9px;color:#000;transform:scaleX(0.915);transform-origin:0 0;">1F056</div><div class="r" style="left:610px;top:448px;width:12px;height:7px;box-sizing:border-box;border:1px solid #8C8C8C;"></div><svg class="r" style="left:610px;top:448px" width="12" height="7"><rect x="5.6" y="1.5" width="0.8" height="4" fill="#9A9A9A"/><rect x="1.6" y="1.4" width="1.1" height="1.1" fill="#9A9A9A"/><rect x="4.2" y="1.4" width="1.1" height="1.1" fill="#9A9A9A"/><rect x="2.9" y="2.8" width="1.1" height="1.1" fill="#9A9A9A"/><rect x="1.6" y="4.2" width="1.1" height="1.1" fill="#9A9A9A"/><rect x="4.2" y="4.2" width="1.1" height="1.1" fill="#9A9A9A"/><rect x="7.1" y="1.4" width="1.1" height="1.1" fill="#9A9A9A"/><rect x="9.7" y="4.2" width="1.1" height="1.1" fill="#9A9A9A"/></svg><div class="t" style="left:7.5px;top:467px;font-size:12.9px;line-height:12.9px;color:#000;">[Домино] горизонтальная плитка 05-03</div><div class="t" style="left:444px;top:467px;font-size:12.9px;line-height:12.9px;color:#000;transform:scaleX(0.975);transform-origin:0 0;">dm h53</div><div class="t" style="left:714px;top:467px;font-size:12.9px;line-height:12.9px;color:#000;transform:scaleX(0.915);transform-origin:0 0;">1F057</div><div class="r" style="left:610px;top:470px;width:12px;height:7px;box-sizing:border-box;border:1px solid #8C8C8C;"></div><svg class="r" style="left:610px;top:470px" width="12" height="7"><rect x="5.6" y="1.5" width="0.8" height="4" fill="#9A9A9A"/><rect x="1.6" y="1.4" width="1.1" height="1.1" fill="#9A9A9A"/><rect x="4.2" y="1.4" width="1.1" height="1.1" fill="#9A9A9A"/><rect x="2.9" y="2.8" width="1.1" height="1.1" fill="#9A9A9A"/><rect x="1.6" y="4.2" width="1.1" height="1.1" fill="#9A9A9A"/><rect x="4.2" y="4.2" width="1.1" height="1.1" fill="#9A9A9A"/><rect x="7.1" y="1.4" width="1.1" height="1.1" fill="#9A9A9A"/><rect x="8.4" y="2.8" width="1.1" height="1.1" fill="#9A9A9A"/><rect x="9.7" y="4.2" width="1.1" height="1.1" fill="#9A9A9A"/></svg><div class="t" style="left:7.5px;top:489px;font-size:12.9px;line-height:12.9px;color:#000;">[Домино] горизонтальная плитка 05-04</div><div class="t" style="left:444px;top:489px;font-size:12.9px;line-height:12.9px;color:#000;transform:scaleX(0.975);transform-origin:0 0;">dm h54</div><div class="t" style="left:714px;top:489px;font-size:12.9px;line-height:12.9px;color:#000;transform:scaleX(0.915);transform-origin:0 0;">1F058</div><div class="r" style="left:610px;top:492px;width:12px;height:7px;box-sizing:border-box;border:1px solid #8C8C8C;"></div><svg class="r" style="left:610px;top:492px" width="12" height="7"><rect x="5.6" y="1.5" width="0.8" height="4" fill="#9A9A9A"/><rect x="1.6" y="1.4" width="1.1" height="1.1" fill="#9A9A9A"/><rect x="4.2" y="1.4" width="1.1" height="1.1" fill="#9A9A9A"/><rect x="2.9" y="2.8" width="1.1" height="1.1" fill="#9A9A9A"/><rect x="1.6" y="4.2" width="1.1" height="1.1" fill="#9A9A9A"/><rect x="4.2" y="4.2" width="1.1" height="1.1" fill="#9A9A9A"/><rect x="7.1" y="1.4" width="1.1" height="1.1" fill="#9A9A9A"/><rect x="9.7" y="1.4" width="1.1" height="1.1" fill="#9A9A9A"/><rect x="7.1" y="4.2" width="1.1" height="1.1" fill="#9A9A9A"/><rect x="9.7" y="4.2" width="1.1" height="1.1" fill="#9A9A9A"/></svg><div class="t" style="left:7.5px;top:511px;font-size:12.9px;line-height:12.9px;color:#000;">[Домино] горизонтальная плитка 05-05</div><div class="t" style="left:444px;top:511px;font-size:12.9px;line-height:12.9px;color:#000;transform:scaleX(0.975);transform-origin:0 0;">dm h55</div><div class="t" style="left:714px;top:511px;font-size:12.9px;line-height:12.9px;color:#000;transform:scaleX(0.915);transform-origin:0 0;">1F059</div><div class="r" style="left:610px;top:514px;width:12px;height:7px;box-sizing:border-box;border:1px solid #8C8C8C;"></div><svg class="r" style="left:610px;top:514px" width="12" height="7"><rect x="5.6" y="1.5" width="0.8" height="4" fill="#9A9A9A"/><rect x="1.6" y="1.4" width="1.1" height="1.1" fill="#9A9A9A"/><rect x="4.2" y="1.4" width="1.1" height="1.1" fill="#9A9A9A"/><rect x="2.9" y="2.8" width="1.1" height="1.1" fill="#9A9A9A"/><rect x="1.6" y="4.2" width="1.1" height="1.1" fill="#9A9A9A"/><rect x="4.2" y="4.2" width="1.1" height="1.1" fill="#9A9A9A"/><rect x="7.1" y="1.4" width="1.1" height="1.1" fill="#9A9A9A"/><rect x="9.7" y="1.4" width="1.1" height="1.1" fill="#9A9A9A"/><rect x="8.4" y="2.8" width="1.1" height="1.1" fill="#9A9A9A"/><rect x="7.1" y="4.2" width="1.1" height="1.1" fill="#9A9A9A"/><rect x="9.7" y="4.2" width="1.1" height="1.1" fill="#9A9A9A"/></svg><div class="t" style="left:7.5px;top:533px;font-size:12.9px;line-height:12.9px;color:#000;">[Домино] горизонтальная плитка 05-06</div><div class="t" style="left:444px;top:533px;font-size:12.9px;line-height:12.9px;color:#000;transform:scaleX(0.975);transform-origin:0 0;">dm h56</div><div class="t" style="left:714px;top:533px;font-size:12.9px;line-height:12.9px;color:#000;transform:scaleX(0.915);transform-origin:0 0;">1F05A</div><div class="r" style="left:610px;top:536px;width:12px;height:7px;box-sizing:border-box;border:1px solid #8C8C8C;"></div><svg class="r" style="left:610px;top:536px" width="12" height="7"><rect x="5.6" y="1.5" width="0.8" height="4" fill="#9A9A9A"/><rect x="1.6" y="1.4" width="1.1" height="1.1" fill="#9A9A9A"/><rect x="4.2" y="1.4" width="1.1" height="1.1" fill="#9A9A9A"/><rect x="2.9" y="2.8" width="1.1" height="1.1" fill="#9A9A9A"/><rect x="1.6" y="4.2" width="1.1" height="1.1" fill="#9A9A9A"/><rect x="4.2" y="4.2" width="1.1" height="1.1" fill="#9A9A9A"/><rect x="7.1" y="1.4" width="1.1" height="1.1" fill="#9A9A9A"/><rect x="8.4" y="1.4" width="1.1" height="1.1" fill="#9A9A9A"/><rect x="9.7" y="1.4" width="1.1" height="1.1" fill="#9A9A9A"/><rect x="7.1" y="4.2" width="1.1" height="1.1" fill="#9A9A9A"/><rect x="8.4" y="4.2" width="1.1" height="1.1" fill="#9A9A9A"/><rect x="9.7" y="4.2" width="1.1" height="1.1" fill="#9A9A9A"/></svg><div class="t" style="left:7.5px;top:555px;font-size:12.9px;line-height:12.9px;color:#000;">[Домино] горизонтальная плитка 06-00</div><div class="t" style="left:444px;top:555px;font-size:12.9px;line-height:12.9px;color:#000;transform:scaleX(0.975);transform-origin:0 0;">dm h60</div><div class="t" style="left:714px;top:555px;font-size:12.9px;line-height:12.9px;color:#000;transform:scaleX(0.915);transform-origin:0 0;">1F05B</div><div class="r" style="left:610px;top:558px;width:12px;height:7px;box-sizing:border-box;border:1px solid #8C8C8C;"></div><svg class="r" style="left:610px;top:558px" width="12" height="7"><rect x="5.6" y="1.5" width="0.8" height="4" fill="#9A9A9A"/><rect x="1.6" y="1.4" width="1.1" height="1.1" fill="#9A9A9A"/><rect x="2.9" y="1.4" width="1.1" height="1.1" fill="#9A9A9A"/><rect x="4.2" y="1.4" width="1.1" height="1.1" fill="#9A9A9A"/><rect x="1.6" y="4.2" width="1.1" height="1.1" fill="#9A9A9A"/><rect x="2.9" y="4.2" width="1.1" height="1.1" fill="#9A9A9A"/><rect x="4.2" y="4.2" width="1.1" height="1.1" fill="#9A9A9A"/></svg><div class="t" style="left:7.5px;top:577px;font-size:12.9px;line-height:12.9px;color:#000;">[Домино] горизонтальная плитка 06-01</div><div class="t" style="left:444px;top:577px;font-size:12.9px;line-height:12.9px;color:#000;transform:scaleX(0.975);transform-origin:0 0;">dm h61</div><div class="t" style="left:714px;top:577px;font-size:12.9px;line-height:12.9px;color:#000;transform:scaleX(0.915);transform-origin:0 0;">1F05C</div><div class="r" style="left:610px;top:580px;width:12px;height:7px;box-sizing:border-box;border:1px solid #8C8C8C;"></div><svg class="r" style="left:610px;top:580px" width="12" height="7"><rect x="5.6" y="1.5" width="0.8" height="4" fill="#9A9A9A"/><rect x="1.6" y="1.4" width="1.1" height="1.1" fill="#9A9A9A"/><rect x="2.9" y="1.4" width="1.1" height="1.1" fill="#9A9A9A"/><rect x="4.2" y="1.4" width="1.1" height="1.1" fill="#9A9A9A"/><rect x="1.6" y="4.2" width="1.1" height="1.1" fill="#9A9A9A"/><rect x="2.9" y="4.2" width="1.1" height="1.1" fill="#9A9A9A"/><rect x="4.2" y="4.2" width="1.1" height="1.1" fill="#9A9A9A"/><rect x="8.4" y="2.8" width="1.1" height="1.1" fill="#9A9A9A"/></svg><div class="t" style="left:7.5px;top:599px;font-size:12.9px;line-height:12.9px;color:#000;">[Домино] горизонтальная плитка 06-02</div><div class="t" style="left:444px;top:599px;font-size:12.9px;line-height:12.9px;color:#000;transform:scaleX(0.975);transform-origin:0 0;">dm h62</div><div class="t" style="left:714px;top:599px;font-size:12.9px;line-height:12.9px;color:#000;transform:scaleX(0.915);transform-origin:0 0;">1F05D</div><div class="r" style="left:610px;top:602px;width:12px;height:7px;box-sizing:border-box;border:1px solid #8C8C8C;"></div><svg class="r" style="left:610px;top:602px" width="12" height="7"><rect x="5.6" y="1.5" width="0.8" height="4" fill="#9A9A9A"/><rect x="1.6" y="1.4" width="1.1" height="1.1" fill="#9A9A9A"/><rect x="2.9" y="1.4" width="1.1" height="1.1" fill="#9A9A9A"/><rect x="4.2" y="1.4" width="1.1" height="1.1" fill="#9A9A9A"/><rect x="1.6" y="4.2" width="1.1" height="1.1" fill="#9A9A9A"/><rect x="2.9" y="4.2" width="1.1" height="1.1" fill="#9A9A9A"/><rect x="4.2" y="4.2" width="1.1" height="1.1" fill="#9A9A9A"/><rect x="7.1" y="1.4" width="1.1" height="1.1" fill="#9A9A9A"/><rect x="9.7" y="4.2" width="1.1" height="1.1" fill="#9A9A9A"/></svg><div class="t" style="left:7.5px;top:621px;font-size:12.9px;line-height:12.9px;color:#000;">[Домино] горизонтальная плитка 06-03</div><div class="t" style="left:444px;top:621px;font-size:12.9px;line-height:12.9px;color:#000;transform:scaleX(0.975);transform-origin:0 0;">dm h63</div><div class="t" style="left:714px;top:621px;font-size:12.9px;line-height:12.9px;color:#000;transform:scaleX(0.915);transform-origin:0 0;">1F05E</div><div class="r" style="left:610px;top:624px;width:12px;height:7px;box-sizing:border-box;border:1px solid #8C8C8C;"></div><svg class="r" style="left:610px;top:624px" width="12" height="7"><rect x="5.6" y="1.5" width="0.8" height="4" fill="#9A9A9A"/><rect x="1.6" y="1.4" width="1.1" height="1.1" fill="#9A9A9A"/><rect x="2.9" y="1.4" width="1.1" height="1.1" fill="#9A9A9A"/><rect x="4.2" y="1.4" width="1.1" height="1.1" fill="#9A9A9A"/><rect x="1.6" y="4.2" width="1.1" height="1.1" fill="#9A9A9A"/><rect x="2.9" y="4.2" width="1.1" height="1.1" fill="#9A9A9A"/><rect x="4.2" y="4.2" width="1.1" height="1.1" fill="#9A9A9A"/><rect x="7.1" y="1.4" width="1.1" height="1.1" fill="#9A9A9A"/><rect x="8.4" y="2.8" width="1.1" height="1.1" fill="#9A9A9A"/><rect x="9.7" y="4.2" width="1.1" height="1.1" fill="#9A9A9A"/></svg><div class="t" style="left:7.5px;top:643px;font-size:12.9px;line-height:12.9px;color:#000;">[Домино] горизонтальная плитка 06-04</div><div class="t" style="left:444px;top:643px;font-size:12.9px;line-height:12.9px;color:#000;transform:scaleX(0.975);transform-origin:0 0;">dm h64</div><div class="t" style="left:714px;top:643px;font-size:12.9px;line-height:12.9px;color:#000;transform:scaleX(0.915);transform-origin:0 0;">1F05F</div><div class="r" style="left:610px;top:646px;width:12px;height:7px;box-sizing:border-box;border:1px solid #8C8C8C;"></div><svg class="r" style="left:610px;top:646px" width="12" height="7"><rect x="5.6" y="1.5" width="0.8" height="4" fill="#9A9A9A"/><rect x="1.6" y="1.4" width="1.1" height="1.1" fill="#9A9A9A"/><rect x="2.9" y="1.4" width="1.1" height="1.1" fill="#9A9A9A"/><rect x="4.2" y="1.4" width="1.1" height="1.1" fill="#9A9A9A"/><rect x="1.6" y="4.2" width="1.1" height="1.1" fill="#9A9A9A"/><rect x="2.9" y="4.2" width="1.1" height="1.1" fill="#9A9A9A"/><rect x="4.2" y="4.2" width="1.1" height="1.1" fill="#9A9A9A"/><rect x="7.1" y="1.4" width="1.1" height="1.1" fill="#9A9A9A"/><rect x="9.7" y="1.4" width="1.1" height="1.1" fill="#9A9A9A"/><rect x="7.1" y="4.2" width="1.1" height="1.1" fill="#9A9A9A"/><rect x="9.7" y="4.2" width="1.1" height="1.1" fill="#9A9A9A"/></svg><div class="t" style="left:7.5px;top:665px;font-size:12.9px;line-height:12.9px;color:#000;">[Домино] горизонтальная плитка 06-05</div><div class="t" style="left:444px;top:665px;font-size:12.9px;line-height:12.9px;color:#000;transform:scaleX(0.975);transform-origin:0 0;">dm h65</div><div class="t" style="left:714px;top:665px;font-size:12.9px;line-height:12.9px;color:#000;transform:scaleX(0.915);transform-origin:0 0;">1F060</div><div class="r" style="left:610px;top:668px;width:12px;height:7px;box-sizing:border-box;border:1px solid #8C8C8C;"></div><svg class="r" style="left:610px;top:668px" width="12" height="7"><rect x="5.6" y="1.5" width="0.8" height="4" fill="#9A9A9A"/><rect x="1.6" y="1.4" width="1.1" height="1.1" fill="#9A9A9A"/><rect x="2.9" y="1.4" width="1.1" height="1.1" fill="#9A9A9A"/><rect x="4.2" y="1.4" width="1.1" height="1.1" fill="#9A9A9A"/><rect x="1.6" y="4.2" width="1.1" height="1.1" fill="#9A9A9A"/><rect x="2.9" y="4.2" width="1.1" height="1.1" fill="#9A9A9A"/><rect x="4.2" y="4.2" width="1.1" height="1.1" fill="#9A9A9A"/><rect x="7.1" y="1.4" width="1.1" height="1.1" fill="#9A9A9A"/><rect x="9.7" y="1.4" width="1.1" height="1.1" fill="#9A9A9A"/><rect x="8.4" y="2.8" width="1.1" height="1.1" fill="#9A9A9A"/><rect x="7.1" y="4.2" width="1.1" height="1.1" fill="#9A9A9A"/><rect x="9.7" y="4.2" width="1.1" height="1.1" fill="#9A9A9A"/></svg><div class="t" style="left:7.5px;top:687px;font-size:12.9px;line-height:12.9px;color:#000;">[Домино] горизонтальная плитка 06-06</div><div class="t" style="left:444px;top:687px;font-size:12.9px;line-height:12.9px;color:#000;transform:scaleX(0.975);transform-origin:0 0;">dm h66</div><div class="t" style="left:714px;top:687px;font-size:12.9px;line-height:12.9px;color:#000;transform:scaleX(0.915);transform-origin:0 0;">1F061</div><div class="r" style="left:610px;top:690px;width:12px;height:7px;box-sizing:border-box;border:1px solid #8C8C8C;"></div><svg class="r" style="left:610px;top:690px" width="12" height="7"><rect x="5.6" y="1.5" width="0.8" height="4" fill="#9A9A9A"/><rect x="1.6" y="1.4" width="1.1" height="1.1" fill="#9A9A9A"/><rect x="2.9" y="1.4" width="1.1" height="1.1" fill="#9A9A9A"/><rect x="4.2" y="1.4" width="1.1" height="1.1" fill="#9A9A9A"/><rect x="1.6" y="4.2" width="1.1" height="1.1" fill="#9A9A9A"/><rect x="2.9" y="4.2" width="1.1" height="1.1" fill="#9A9A9A"/><rect x="4.2" y="4.2" width="1.1" height="1.1" fill="#9A9A9A"/><rect x="7.1" y="1.4" width="1.1" height="1.1" fill="#9A9A9A"/><rect x="8.4" y="1.4" width="1.1" height="1.1" fill="#9A9A9A"/><rect x="9.7" y="1.4" width="1.1" height="1.1" fill="#9A9A9A"/><rect x="7.1" y="4.2" width="1.1" height="1.1" fill="#9A9A9A"/><rect x="8.4" y="4.2" width="1.1" height="1.1" fill="#9A9A9A"/><rect x="9.7" y="4.2" width="1.1" height="1.1" fill="#9A9A9A"/></svg><div class="t" style="left:7.5px;top:709px;font-size:12.9px;line-height:12.9px;color:#000;">[Домино] вертикальная плитка (Тыльная сторона)</div><div class="t" style="left:444px;top:709px;font-size:12.9px;line-height:12.9px;color:#000;transform:scaleX(0.975);transform-origin:0 0;">dm vb</div><div class="t" style="left:714px;top:709px;font-size:12.9px;line-height:12.9px;color:#000;transform:scaleX(0.915);transform-origin:0 0;">1F062</div><div class="r" style="left:613px;top:709px;width:6px;height:12px;background:#5A5A5A;border-radius:1px"></div><div class="t" style="left:7.5px;top:731px;font-size:12.9px;line-height:12.9px;color:#000;">[Домино] вертикальная плитка 00-00</div><div class="t" style="left:444px;top:731px;font-size:12.9px;line-height:12.9px;color:#000;transform:scaleX(0.975);transform-origin:0 0;">dm v00</div><div class="t" style="left:714px;top:731px;font-size:12.9px;line-height:12.9px;color:#000;transform:scaleX(0.915);transform-origin:0 0;">1F063</div><div class="r" style="left:613px;top:731px;width:7px;height:12px;box-sizing:border-box;border:1px solid #8C8C8C;border-radius:1px"></div><div class="r" style="left:615px;top:737px;width:3px;height:1px;background:#8C8C8C"></div><div class="t" style="left:7.5px;top:753px;font-size:12.9px;line-height:12.9px;color:#000;">[Домино] вертикальная плитка 00-01</div><div class="t" style="left:444px;top:753px;font-size:12.9px;line-height:12.9px;color:#000;transform:scaleX(0.975);transform-origin:0 0;">dm v01</div><div class="t" style="left:714px;top:753px;font-size:12.9px;line-height:12.9px;color:#000;transform:scaleX(0.915);transform-origin:0 0;">1F064</div><div class="r" style="left:613px;top:753px;width:7px;height:12px;box-sizing:border-box;border:1px solid #8C8C8C;border-radius:1px"></div><div class="r" style="left:615px;top:759px;width:3px;height:1px;background:#8C8C8C"></div><div class="t" style="left:7.5px;top:775px;font-size:12.9px;line-height:12.9px;color:#000;">[Домино] вертикальная плитка 00-02</div><div class="t" style="left:444px;top:775px;font-size:12.9px;line-height:12.9px;color:#000;transform:scaleX(0.975);transform-origin:0 0;">dm v02</div><div class="t" style="left:714px;top:775px;font-size:12.9px;line-height:12.9px;color:#000;transform:scaleX(0.915);transform-origin:0 0;">1F065</div><div class="r" style="left:613px;top:775px;width:7px;height:12px;box-sizing:border-box;border:1px solid #8C8C8C;border-radius:1px"></div><div class="r" style="left:615px;top:781px;width:3px;height:1px;background:#8C8C8C"></div>
</div>
<div class="r" style="left:836px;top:78px;width:16px;height:806px;background:#F0F0F0;"></div>
<div class="r" style="left:836px;top:787px;width:15px;height:17px;background:#CDCDCD;"></div>
<svg class="r" style="left:839px;top:82px" width="10" height="10" viewBox="0 0 10 10"><path d="M1.6 7.6 L4.5 3.2 L7.4 7.6" stroke="#555" stroke-width="1.7" fill="none"/></svg>
<svg class="r" style="left:839px;top:871px" width="10" height="10" viewBox="0 0 10 10"><path d="M1.6 2.4 L4.5 6.8 L7.4 2.4" stroke="#555" stroke-width="1.7" fill="none"/></svg>
<div class="r" style="left:23px;top:892px;width:22px;height:22px;box-sizing:border-box;border:1px solid #ADADAD;background:#E1E1E1;"></div>
<svg class="r" style="left:23px;top:892px" width="22" height="22" viewBox="0 0 22 22"><defs><radialGradient id="lg" cx="0.4" cy="0.35" r="0.7"><stop offset="0" stop-color="#E6F2FB"/><stop offset="1" stop-color="#A9CBE6"/></radialGradient></defs><path d="M4.5 17.5 L10 12" stroke="#5E6B73" stroke-width="1.6" stroke-linecap="round"/><circle cx="13" cy="9" r="4.6" fill="url(#lg)" stroke="#9DB0BC" stroke-width="0.9"/></svg>
<div class="r" style="left:50px;top:891px;width:805px;height:24px;box-sizing:border-box;border:1px solid #7A7A7A;background:#FFFFFF;"></div>
<div class="r" style="left:864px;top:82px;width:366px;height:832px;box-sizing:border-box;border:1px solid #DCDCDC;background:transparent;"></div>
<div class="r" style="left:1032px;top:80px;width:30px;height:5px;background:#FFFFFF;"></div>
<div class="t" style="left:1035.00px;top:77px;font-size:12px;line-height:12px;color:#000;font-family:'Liberation Sans',sans-serif;transform:scaleX(0.9492);transform-origin:0 0;">Знак</div>
<div class="r" style="left:916px;top:136px;width:261px;height:128px;box-sizing:border-box;border:1px solid #7A7A7A;background:#FFFFFF;"></div>
<svg class="r" style="left:1003px;top:181px" width="87" height="47" viewBox="1003 181 87 47"><rect x="1005.5" y="183.5" width="81" height="41" fill="none" stroke="#2B2B2B" stroke-width="3"/><g fill="#2B2B2B"><circle cx="1015.7" cy="193.6" r="3.6"/><circle cx="1026.1" cy="204" r="3.6"/><circle cx="1036.5" cy="214.5" r="3.6"/><circle cx="1055.3" cy="193.6" r="3.6"/><circle cx="1065.6" cy="193.6" r="3.6"/><circle cx="1076.3" cy="193.6" r="3.6"/><circle cx="1055.3" cy="214.5" r="3.6"/><circle cx="1065.6" cy="214.5" r="3.6"/><circle cx="1076.3" cy="214.5" r="3.6"/><rect x="1044.8" y="192" width="2.4" height="24"/></g></svg>
<div class="r" style="left:1179px;top:136px;width:22px;height:22px;box-sizing:border-box;border:1px solid #C4C4C4;background:#CCCCCC;"></div>
<div class="r" style="left:1179px;top:159px;width:22px;height:22px;box-sizing:border-box;border:1px solid #C4C4C4;background:#CCCCCC;"></div>
<svg class="r" style="left:1179px;top:136px" width="22" height="22" viewBox="0 0 22 22"><path d="M4.8 6.8 Q4.8 6 5.6 6 H10.6 V15 H4.8 Z M11.4 15 V6 H16.4 Q17.2 6 17.2 6.8 V15 Z" fill="none" stroke="#808080" stroke-width="1"/><path d="M4.3 15.8 H17.7" stroke="#707070" stroke-width="1.2"/><path d="M10.2 16.5 H11.8" stroke="#909090" stroke-width="1"/></svg>
<svg class="r" style="left:1179px;top:159px" width="22" height="22" viewBox="0 0 22 22"><path d="M6.4 9.6 Q7.6 7.6 10 8.6 V17 M10 9 Q12.6 6.8 13.8 8.8 Q14.2 10.4 12.2 11 Q14.6 11.6 14 13.6 Q13.2 15 11.2 14.4 M6.8 13.2 H10" fill="none" stroke="#7E7E7E" stroke-width="1.05"/></svg>
<div class="r" style="left:916px;top:269px;width:28px;height:32px;box-sizing:border-box;border:1px solid #707070;background:#FFFFFF;"></div>
<svg class="r" style="left:923px;top:279px" width="14" height="14" viewBox="0 0 14 14"><g fill="none" stroke="#B4B4B4" stroke-linejoin="round" stroke-linecap="round"><path d="M1.6 4.6 Q0.4 2.6 1.8 1.2 Q3.4 -0.1 5.6 0.9" stroke-width="1.1"/><path d="M5.6 0.9 Q6.3 5 5.8 8.6 Q5.3 10.4 2.4 10.9" stroke-width="1.5"/><path d="M2.4 10.9 Q4.2 13 6 12.5 Q8 11.6 10.2 11.3" stroke-width="1.1"/><path d="M5.6 0.9 L10.2 1.4" stroke-width="0.9"/><path d="M10.2 1.2 V12.6" stroke-width="1.3"/><path d="M10.2 1 L13.2 0.3 M10.2 12 L13 12.8" stroke-width="1"/></g></svg>
<div class="r" style="left:950px;top:269px;width:28px;height:32px;box-sizing:border-box;border:1px solid #707070;background:#FFFFFF;"></div>
<svg class="r" style="left:957px;top:279px" width="14" height="14" viewBox="0 0 14 14"><g fill="none" stroke="#B4B4B4" stroke-linejoin="round" stroke-linecap="round"><path d="M1.6 4.6 Q0.4 2.6 1.8 1.2 Q3.4 -0.1 5.6 0.9" stroke-width="1.1"/><path d="M5.6 0.9 Q6.3 5 5.8 8.6 Q5.3 10.4 2.4 10.9" stroke-width="1.5"/><path d="M2.4 10.9 Q4.2 13 6 12.5 Q8 11.6 10.2 11.3" stroke-width="1.1"/><path d="M5.6 0.9 L10.2 1.4" stroke-width="0.9"/><path d="M10.2 1.2 V12.6" stroke-width="1.3"/><path d="M10.2 1 L13.2 0.3 M10.2 12 L13 12.8" stroke-width="1"/></g></svg>
<div class="r" style="left:983px;top:269px;width:28px;height:32px;box-sizing:border-box;border:1px solid #707070;background:#FFFFFF;"></div>
<svg class="r" style="left:990px;top:279px" width="14" height="14" viewBox="0 0 14 14"><g fill="none" stroke="#B4B4B4" stroke-linejoin="round" stroke-linecap="round"><path d="M1.6 4.6 Q0.4 2.6 1.8 1.2 Q3.4 -0.1 5.6 0.9" stroke-width="1.1"/><path d="M5.6 0.9 Q6.3 5 5.8 8.6 Q5.3 10.4 2.4 10.9" stroke-width="1.5"/><path d="M2.4 10.9 Q4.2 13 6 12.5 Q8 11.6 10.2 11.3" stroke-width="1.1"/><path d="M5.6 0.9 L10.2 1.4" stroke-width="0.9"/><path d="M10.2 1.2 V12.6" stroke-width="1.3"/><path d="M10.2 1 L13.2 0.3 M10.2 12 L13 12.8" stroke-width="1"/></g></svg>
<div class="r" style="left:1016px;top:269px;width:28px;height:32px;box-sizing:border-box;border:1px solid #707070;background:#FFFFFF;"></div>
<svg class="r" style="left:1023px;top:279px" width="14" height="14" viewBox="0 0 14 14"><g fill="none" stroke="#B4B4B4" stroke-linejoin="round" stroke-linecap="round"><path d="M1.6 4.6 Q0.4 2.6 1.8 1.2 Q3.4 -0.1 5.6 0.9" stroke-width="1.1"/><path d="M5.6 0.9 Q6.3 5 5.8 8.6 Q5.3 10.4 2.4 10.9" stroke-width="1.5"/><path d="M2.4 10.9 Q4.2 13 6 12.5 Q8 11.6 10.2 11.3" stroke-width="1.1"/><path d="M5.6 0.9 L10.2 1.4" stroke-width="0.9"/><path d="M10.2 1.2 V12.6" stroke-width="1.3"/><path d="M10.2 1 L13.2 0.3 M10.2 12 L13 12.8" stroke-width="1"/></g></svg>
<div class="r" style="left:1050px;top:269px;width:28px;height:32px;box-sizing:border-box;border:1px solid #707070;background:#FFFFFF;"></div>
<svg class="r" style="left:1057px;top:279px" width="14" height="14" viewBox="0 0 14 14"><g fill="none" stroke="#B4B4B4" stroke-linejoin="round" stroke-linecap="round"><path d="M1.6 4.6 Q0.4 2.6 1.8 1.2 Q3.4 -0.1 5.6 0.9" stroke-width="1.1"/><path d="M5.6 0.9 Q6.3 5 5.8 8.6 Q5.3 10.4 2.4 10.9" stroke-width="1.5"/><path d="M2.4 10.9 Q4.2 13 6 12.5 Q8 11.6 10.2 11.3" stroke-width="1.1"/><path d="M5.6 0.9 L10.2 1.4" stroke-width="0.9"/><path d="M10.2 1.2 V12.6" stroke-width="1.3"/><path d="M10.2 1 L13.2 0.3 M10.2 12 L13 12.8" stroke-width="1"/></g></svg>
<div class="r" style="left:1083px;top:269px;width:28px;height:32px;box-sizing:border-box;border:1px solid #707070;background:#FFFFFF;"></div>
<svg class="r" style="left:1090px;top:279px" width="14" height="14" viewBox="0 0 14 14"><g fill="none" stroke="#B4B4B4" stroke-linejoin="round" stroke-linecap="round"><path d="M1.6 4.6 Q0.4 2.6 1.8 1.2 Q3.4 -0.1 5.6 0.9" stroke-width="1.1"/><path d="M5.6 0.9 Q6.3 5 5.8 8.6 Q5.3 10.4 2.4 10.9" stroke-width="1.5"/><path d="M2.4 10.9 Q4.2 13 6 12.5 Q8 11.6 10.2 11.3" stroke-width="1.1"/><path d="M5.6 0.9 L10.2 1.4" stroke-width="0.9"/><path d="M10.2 1.2 V12.6" stroke-width="1.3"/><path d="M10.2 1 L13.2 0.3 M10.2 12 L13 12.8" stroke-width="1"/></g></svg>
<div class="r" style="left:1116px;top:269px;width:28px;height:32px;box-sizing:border-box;border:1px solid #707070;background:#FFFFFF;"></div>
<svg class="r" style="left:1123px;top:279px" width="14" height="14" viewBox="0 0 14 14"><g fill="none" stroke="#B4B4B4" stroke-linejoin="round" stroke-linecap="round"><path d="M1.6 4.6 Q0.4 2.6 1.8 1.2 Q3.4 -0.1 5.6 0.9" stroke-width="1.1"/><path d="M5.6 0.9 Q6.3 5 5.8 8.6 Q5.3 10.4 2.4 10.9" stroke-width="1.5"/><path d="M2.4 10.9 Q4.2 13 6 12.5 Q8 11.6 10.2 11.3" stroke-width="1.1"/><path d="M5.6 0.9 L10.2 1.4" stroke-width="0.9"/><path d="M10.2 1.2 V12.6" stroke-width="1.3"/><path d="M10.2 1 L13.2 0.3 M10.2 12 L13 12.8" stroke-width="1"/></g></svg>
<div class="r" style="left:1150px;top:269px;width:28px;height:32px;box-sizing:border-box;border:1px solid #707070;background:#FFFFFF;"></div>
<svg class="r" style="left:1157px;top:279px" width="14" height="14" viewBox="0 0 14 14"><g fill="none" stroke="#B4B4B4" stroke-linejoin="round" stroke-linecap="round"><path d="M1.6 4.6 Q0.4 2.6 1.8 1.2 Q3.4 -0.1 5.6 0.9" stroke-width="1.1"/><path d="M5.6 0.9 Q6.3 5 5.8 8.6 Q5.3 10.4 2.4 10.9" stroke-width="1.5"/><path d="M2.4 10.9 Q4.2 13 6 12.5 Q8 11.6 10.2 11.3" stroke-width="1.1"/><path d="M5.6 0.9 L10.2 1.4" stroke-width="0.9"/><path d="M10.2 1.2 V12.6" stroke-width="1.3"/><path d="M10.2 1 L13.2 0.3 M10.2 12 L13 12.8" stroke-width="1"/></g></svg>
<div class="t" style="left:982.80px;top:323px;font-size:22px;line-height:22px;color:#1E1E1E;font-family:'Liberation Serif',serif;transform:scaleX(1.0574);transform-origin:0 0;">Плитка</div>
<div class="t" style="left:1060.40px;top:323px;font-size:22px;line-height:22px;color:#1E1E1E;font-family:'Liberation Serif',serif;transform:scaleX(0.9741);transform-origin:0 0;">03-06</div>
<div class="t" style="left:916.00px;top:405px;font-size:11px;line-height:11px;color:#000;font-family:'Liberation Sans',sans-serif;transform:scaleX(0.9899);transform-origin:0 0;">Рецепт</div>
<div class="r" style="left:916px;top:419px;width:261px;height:28px;box-sizing:border-box;border:1px solid #7A7A7A;background:#FFFFFF;"></div>
<div class="t" style="left:1018.50px;top:425px;font-size:16.5px;line-height:16.5px;color:#000;font-family:'Liberation Sans',sans-serif;transform:scaleX(1.0173);transform-origin:0 0;">dm h36</div>
<div class="t" style="left:916.00px;top:481px;font-size:11px;line-height:11px;color:#000;font-family:'Liberation Sans',sans-serif;">Кодовая точка</div>
<div class="t" style="left:1050.00px;top:481px;font-size:11px;line-height:11px;color:#000;font-family:'Liberation Sans',sans-serif;transform:scaleX(0.9747);transform-origin:0 0;">Внутренний ID</div>
<div class="r" style="left:916px;top:495px;width:128px;height:28px;box-sizing:border-box;border:1px solid #7A7A7A;background:#FFFFFF;"></div>
<div class="r" style="left:1050px;top:495px;width:128px;height:28px;box-sizing:border-box;border:1px solid #7A7A7A;background:#FFFFFF;"></div>
<div class="t" style="left:957.00px;top:501px;font-size:16px;line-height:16px;color:#333;font-family:'Liberation Sans',sans-serif;transform:scaleX(0.9785);transform-origin:0 0;">1F04C</div>
<div class="t" style="left:1096.05px;top:501px;font-size:16px;line-height:16px;color:#333;font-family:'Liberation Sans',sans-serif;transform:scaleX(0.9974);transform-origin:0 0;">2782</div>
<div class="t" style="left:916.00px;top:534px;font-size:11px;line-height:11px;color:#000;font-family:'Liberation Sans',sans-serif;transform:scaleX(0.9887);transform-origin:0 0;">HTML-сущность</div>
<div class="r" style="left:916px;top:548px;width:261px;height:28px;box-sizing:border-box;border:1px solid #7A7A7A;background:#FFFFFF;"></div>
<div class="t" style="left:1007.80px;top:554px;font-size:16px;line-height:16px;color:#333;font-family:'Liberation Sans',sans-serif;">&amp;#127052;</div>
<div class="t" style="left:916.00px;top:587px;font-size:11px;line-height:11px;color:#000;font-family:'Liberation Sans',sans-serif;">Альт-код</div>
<div class="r" style="left:916px;top:601px;width:261px;height:28px;box-sizing:border-box;border:1px solid #7A7A7A;background:#FFFFFF;"></div>
<div class="t" style="left:1033.16px;top:607px;font-size:16px;line-height:16px;color:#C4C4C4;font-family:'Liberation Sans',sans-serif;">N/A</div>
<div class="t" style="left:915.70px;top:637px;font-size:13.9px;line-height:13.9px;color:#000;font-family:'Liberation Serif',serif;">L</div>
<div class="t" style="left:919.60px;top:636px;font-size:11.5px;line-height:11.5px;color:#000;font-family:'Liberation Serif',serif;">A</div>
<div class="t" style="left:926.20px;top:637px;font-size:13.9px;line-height:13.9px;color:#000;font-family:'Liberation Serif',serif;">T</div>
<div class="t" style="left:933.00px;top:641px;font-size:13.9px;line-height:13.9px;color:#000;font-family:'Liberation Serif',serif;">E</div>
<div class="t" style="left:939.60px;top:637px;font-size:13.9px;line-height:13.9px;color:#000;font-family:'Liberation Serif',serif;">X</div>
<div class="r" style="left:916px;top:654px;width:261px;height:28px;box-sizing:border-box;border:1px solid #7A7A7A;background:#FFFFFF;"></div>
<div class="t" style="left:1033.16px;top:660px;font-size:16px;line-height:16px;color:#C4C4C4;font-family:'Liberation Sans',sans-serif;">N/A</div>
<div class="t" style="left:917.00px;top:693px;font-size:11px;line-height:11px;color:#4A7FD0;font-family:'Liberation Sans',sans-serif;">Теги</div>
<div class="r" style="left:916px;top:707px;width:261px;height:120px;box-sizing:border-box;border:1px solid #828790;background:#FFFFFF;"></div>
<div class="t" style="left:924.00px;top:712px;font-size:12px;line-height:12px;color:#000;font-family:'Liberation Sans',sans-serif;transform:scaleX(0.8649);transform-origin:0 0;">domino horizontal tile 03-06</div>
<div class="t" style="left:924.00px;top:729px;font-size:12px;line-height:12px;color:#000;font-family:'Liberation Sans',sans-serif;transform:scaleX(0.9139);transform-origin:0 0;">горизонтальная плитка 03-06 домино</div>
<div class="r" style="left:1179px;top:707px;width:22px;height:22px;box-sizing:border-box;border:1px solid #ADADAD;background:#E1E1E1;"></div>
<svg class="r" style="left:1179px;top:707px" width="22" height="22" viewBox="0 0 22 22"><path d="M4.4 12 L11 5.6 L15.4 5.2 L16.3 12.8 L9 16.6 Z" fill="none" stroke="#111" stroke-width="1.2" stroke-linejoin="round"/><path d="M13.2 5.4 L15.6 5.2 L16 9 Z" fill="#111"/><circle cx="12" cy="9.6" r="1" fill="#111"/></svg>
<div class="t" style="left:1013.00px;top:843px;font-size:11px;line-height:11px;color:#4A7FD0;font-family:'Liberation Sans',sans-serif;transform:scaleX(0.9424);transform-origin:0 0;">1F030...1F09F</div>
<div class="t" style="left:1016.50px;top:857px;font-size:11px;line-height:11px;color:#4A7FD0;font-family:'Liberation Sans',sans-serif;transform:scaleX(0.9437);transform-origin:0 0;">Domino Tiles</div>
<div class="t" style="left:957.00px;top:889px;font-size:11px;line-height:11px;color:#000;font-family:'Liberation Sans',sans-serif;">[</div>
<div class="t" style="left:971.00px;top:888px;font-size:12px;line-height:12px;color:#000;font-family:'Liberation Sans',sans-serif;transform:scaleX(0.8734);transform-origin:0 0;">domino_n_tile_03_06_horizontal</div>
<div class="t" style="left:1133.50px;top:889px;font-size:11px;line-height:11px;color:#000;font-family:'Liberation Sans',sans-serif;">]</div>
</body></html>
